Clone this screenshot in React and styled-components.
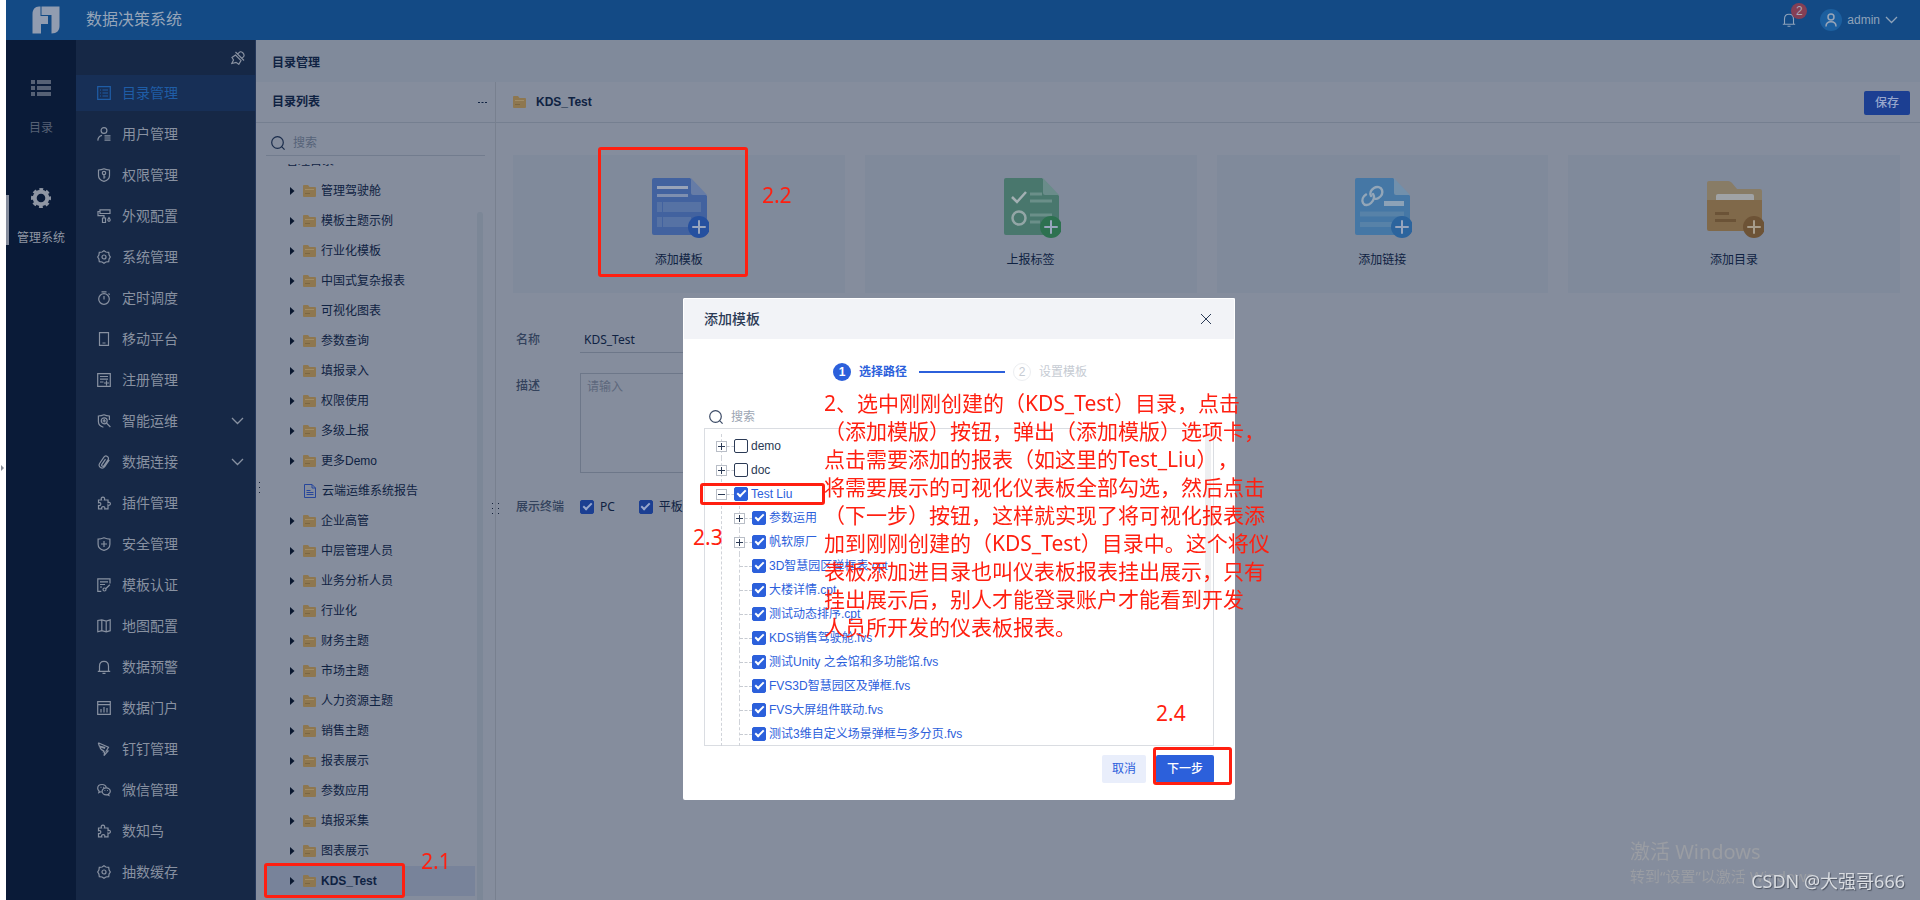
import React from "react";
import styled, { createGlobalStyle, css } from "styled-components";

const SANS = '"Liberation Sans", "Noto Sans CJK SC", sans-serif';
const HUMANIST = '"Noto Sans", "Noto Sans CJK SC", sans-serif';

const Global = createGlobalStyle`
  *, *::before, *::after { box-sizing: border-box; }
  html, body { margin: 0; height: 100%; overflow: hidden; }
  body { background: #fff; font-family: ${SANS}; font-size: 12px; line-height: 16px; color: #0f2242; }
  #root { height: 100%; }
  button, input, textarea { font: inherit; color: inherit; }
  button { padding: 0; border: 0; background: none; cursor: pointer; }
  ul { list-style: none; margin: 0; padding: 0; }
  a { color: inherit; text-decoration: none; }
  svg { display: block; flex: none; }
  h1, h2 { margin: 0; font-size: inherit; }
`;

/* ---------- frame ---------- */
const Page = styled.div`
  display: flex;
  height: 100vh;
`;
const Gutter = styled.div`
  width: 6px;
  flex: none;
  padding-top: 464px;
  color: #8a8f98;
`;
const Shell = styled.div`
  flex: 1;
  min-width: 0;
  display: flex;
  flex-direction: column;
  background: #858d9d;
`;
const TopBar = styled.header`
  flex: none;
  height: 40px;
  display: flex;
  align-items: center;
  padding: 0 22px 0 26px;
  background: #134a85;
  color: #8fa3ba;
`;
const Brand = styled.h1`
  flex: 1;
  margin-left: 26px;
  font-size: 16px;
  line-height: 24px;
  font-weight: 400;
  color: #96a5b9;
`;
const BellButton = styled.button`
  position: relative;
  margin-right: 24px;
`;
const Badge = styled.span`
  position: absolute;
  left: 9px;
  top: -10px;
  width: 16px;
  height: 16px;
  border-radius: 8px;
  background: #843f55;
  color: #a9a9b8;
  text-align: center;
`;
const UserButton = styled.button`
  display: flex;
  align-items: center;
  gap: 5px;
`;
const Avatar = styled.span`
  display: grid;
  place-items: center;
  width: 22px;
  height: 22px;
  border-radius: 11px;
  background: #1c5f9f;
`;
const Body = styled.div`
  flex: 1;
  min-height: 0;
  display: flex;
`;

/* ---------- rail ---------- */
const Rail = styled.nav`
  width: 70px;
  flex: none;
  background: #0a1b38;
`;
const RailItem = styled.a`
  position: relative;
  display: flex;
  flex-direction: column;
  align-items: center;
  gap: 22px;
  height: 110px;
  padding-top: 38px;
  color: ${(p) => (p.$active ? "#8f96a3" : "#566175")};
  ${(p) =>
    p.$active &&
    css`
      &::before {
        content: "";
        position: absolute;
        left: 0;
        top: 45px;
        width: 3px;
        height: 50px;
        background: #858d9d;
      }
    `}
`;

/* ---------- side menu ---------- */
const Side = styled.nav`
  width: 180px;
  flex: none;
  background: #162846;
  border-right: 1px solid #24375a;
  color: #8891a1;
`;
const PinRow = styled.div`
  display: flex;
  justify-content: flex-end;
  align-items: center;
  height: 35px;
  padding-right: 10px;
`;
const MenuList = styled.ul`
  display: flex;
  flex-direction: column;
  gap: 5px;
`;
const MenuLink = styled.a`
  display: flex;
  align-items: center;
  gap: 11px;
  height: 36px;
  padding: 0 11px 0 21px;
  font-size: 14px;
  line-height: 20px;
  background: ${(p) => (p.$active ? "#172f56" : "transparent")};
  color: ${(p) => (p.$active ? "#1f5da6" : "inherit")};
`;
const Grow = styled.span`
  flex: 1;
`;

/* ---------- content ---------- */
const Content = styled.main`
  flex: 1;
  min-width: 0;
  display: flex;
  flex-direction: column;
`;
const PageTitle = styled.h2`
  flex: none;
  height: 42px;
  padding: 0 16px;
  line-height: 46px;
  font-weight: 700;
  background: #808a9b;
`;
const Columns = styled.div`
  flex: 1;
  min-height: 0;
  display: flex;
`;
const TreePanel = styled.section`
  position: relative;
  width: 240px;
  flex: none;
  display: flex;
  flex-direction: column;
  border-right: 1px solid #78808f;
`;
const PanelHead = styled.div`
  flex: none;
  display: flex;
  align-items: center;
  height: 41px;
  padding: 0 8px 0 16px;
  border-bottom: 1px solid #757f90;
  font-weight: 700;
`;
const SearchBox = styled.label`
  flex: none;
  display: flex;
  align-items: center;
  gap: 8px;
  color: ${(p) => (p.$light ? "#3c4b66" : "#1a2c4b")};
  ${(p) =>
    p.$light
      ? css`
          height: 22px;
          padding-left: 5px;
        `
      : css`
          height: 33px;
          margin: 0 10px;
          padding: 8px 0 0 5px;
          border-bottom: 1px solid #727c8e;
        `}
`;
const SearchInput = styled.input`
  flex: 1;
  min-width: 0;
  padding: 0;
  border: 0;
  outline: 0;
  background: none;
  &::placeholder { color: ${(p) => (p.$light ? "#9ca5b3" : "#566379")}; opacity: 1; }
`;
const TreeScroll = styled.div`
  flex: 1;
  min-height: 0;
  margin-top: 8px;
  overflow: hidden;
  display: flex;
  align-items: flex-start;
`;
const TreeRows = styled.ul`
  flex: 1;
  margin: -18px 2px 0 10px;
`;
const TreeRow = styled.li`
  position: relative;
  display: flex;
  align-items: center;
  height: 30px;
  padding-left: ${(p) => (p.$root ? 20 : 23)}px;
  background: ${(p) => (p.$selected ? "#78839a" : "transparent")};
  font-weight: ${(p) => (p.$selected ? 700 : 400)};
`;
const Toggle = styled.button`
  width: 14px;
  visibility: ${(p) => (p.$hidden ? "hidden" : "visible")};
`;
const TreeLink = styled.a`
  display: flex;
  align-items: center;
  gap: ${(p) => (p.$doc ? 6 : 5)}px;
  padding-left: ${(p) => (p.$doc ? 1 : 0)}px;
`;
const ScrollThumb = styled.div`
  flex: none;
  width: 6px;
  height: 100%;
  border-radius: 3px;
  background: ${(p) => (p.$light ? "#eeeff1" : "#7c8797")};
  margin: ${(p) => (p.$light ? "0" : "48px 12px 0 0")};
`;
const Grip = styled.span`
  position: absolute;
  left: ${(p) => p.$left}px;
  top: ${(p) => p.$top}px;
  color: #16233b;
`;

/* ---------- detail ---------- */
const Detail = styled.section`
  flex: 1;
  min-width: 0;
`;
const DetailHead = styled(PanelHead)`
  gap: 10px;
  padding: 0 10px 0 17px;
`;
const SaveButton = styled.button`
  width: 46px;
  height: 24px;
  margin-top: 1px;
  border-radius: 2px;
  background: #1c3f92;
  color: #98a7cc;
  font-weight: 500;
`;
const Cards = styled.div`
  display: grid;
  grid-template-columns: repeat(4, 1fr);
  gap: 20px;
  padding: 32px 20px 0 17px;
`;
const Card = styled.div`
  position: relative;
  height: 138px;
  background: #808a9b;
`;
const CardButton = styled.button`
  display: flex;
  flex-direction: column;
  align-items: center;
  justify-content: flex-start;
  gap: 11px;
  width: 100%;
  height: 100%;
  padding-top: 22px;
`;
const Form = styled.form`
  padding: 28px 20px;
  display: grid;
  grid-template-columns: 64px 300px;
`;
const FieldLabel = styled.label`
  padding-top: ${(p) => p.$pad}px;
  font-weight: 500;
  color: #33425c;
`;
const NameInput = styled.input`
  height: 32px;
  padding: 6px 4px 0;
  border: 0;
  border-bottom: 1px solid #6d7789;
  outline: 0;
  background: none;
  font-family: ${HUMANIST};
`;
const DescInput = styled.textarea`
  height: 100px;
  margin: 20px 0 26px;
  padding: 5px 6px;
  border: 1px solid #6d7789;
  outline: 0;
  resize: none;
  background: none;
  &::placeholder { color: #5d687c; opacity: 1; }
`;
const Terminals = styled.div`
  display: flex;
  gap: 24px;
`;
const CheckLabel = styled.label`
  display: flex;
  align-items: center;
  gap: ${(p) => p.$gap}px;
  font-family: ${(p) => (p.$humanist ? HUMANIST : SANS)};
  color: ${(p) => p.$color || "inherit"};
  white-space: nowrap;
`;
const Check = styled.input`
  appearance: none;
  flex: none;
  width: 14px;
  height: 14px;
  margin: 0;
  border: 1px solid #2b3a55;
  border-radius: 2px;
  display: grid;
  place-items: center;
  &:checked {
    border-color: ${(p) => (p.$dim ? "#1c3f92" : "#2c60db")};
    background: ${(p) => (p.$dim ? "#1c3f92" : "#2c60db")};
  }
  &:checked::before {
    content: "";
    width: 9px;
    height: 5px;
    margin-bottom: 3px;
    border: solid ${(p) => (p.$dim ? "#98a7cc" : "#fff")};
    border-width: 0 0 2px 2px;
    rotate: -45deg;
  }
`;

/* ---------- dialog ---------- */
const Backdrop = styled.div`
  position: fixed;
  inset: 0;
  display: flex;
  justify-content: center;
  align-items: flex-start;
  padding: 298px 2px 0 0;
`;
const Dialog = styled.div`
  position: relative;
  width: 552px;
  border-radius: 2px;
  background: #fff;
  color: #2b3a55;
`;
const DialogHead = styled.div`
  display: flex;
  align-items: center;
  justify-content: space-between;
  height: 41px;
  padding: 0 23px 0 20px;
  background: #f2f3f7;
  border-radius: 2px 2px 0 0;
  border: 1px solid #fff;
  border-bottom: 0;
  font-size: 14px;
  font-weight: 500;
`;
const DialogBody = styled.div`
  padding: 22px 21px 17px;
`;
const Steps = styled.ol`
  display: flex;
  align-items: center;
  justify-content: center;
  gap: 8px;
  height: 22px;
  margin: 0 0 23px;
  padding: 0 0 0 2px;
  list-style: none;
`;
const Step = styled.li`
  display: flex;
  align-items: center;
  gap: 8px;
  color: ${(p) => (p.$on ? "#2c60db" : "#c6cbd3")};
  font-weight: ${(p) => (p.$on ? 700 : 400)};
`;
const StepDot = styled.span`
  width: 18px;
  height: 18px;
  border-radius: 9px;
  line-height: ${(p) => (p.$on ? 18 : 16)}px;
  text-align: center;
  background: ${(p) => (p.$on ? "#2c60db" : "#fff")};
  color: ${(p) => (p.$on ? "#fff" : "#c6cbd3")};
  border: ${(p) => (p.$on ? "0" : "1px solid #eceef1")};
`;
const StepLine = styled.li`
  width: 86px;
  height: 2px;
  margin: 0 0 0 4px;
  background: #2c60db;
`;
const FileBox = styled.div`
  display: flex;
  isolation: isolate;
  height: 318px;
  border: 1px solid #dadde2;
`;
const FileTree = styled.ul`
  flex: 1;
  padding: 5px 0 0 11px;
`;
const Branch = styled.ul`
  margin-left: 5px;
  padding-left: 12px;
  border-left: 1px dashed #d0d3d9;
`;
const FileRow = styled.li`
  position: relative;
  display: flex;
  align-items: center;
  height: 24px;
  ${(p) =>
    p.$line &&
    css`
      &::after {
        content: "";
        position: absolute;
        z-index: -1;
        left: 5px;
        top: 0;
        height: 24px;
        border-left: 1px dashed #d0d3d9;
      }
    `}
`;
const Expander = styled.button`
  width: 11px;
  height: 11px;
  background: #fff;
  border: 1px solid #b9bec7;
  color: #2b3a55;
`;
const Lead = styled.span`
  width: ${(p) => (p.$long ? 12 : 7)}px;
  margin-left: ${(p) => (p.$long ? 6 : 0)}px;
  border-top: 1px dashed #c6cad1;
`;
const ListThumb = styled(ScrollThumb)`
  height: 170px;
  margin: 5px 2px 0 0;
`;
const DialogActions = styled.div`
  display: flex;
  justify-content: flex-end;
  gap: 10px;
  margin-top: 9px;
`;
const ActionButton = styled.button`
  width: ${(p) => (p.$primary ? 58 : 44)}px;
  height: 28px;
  border-radius: 2px;
  background: ${(p) => (p.$primary ? "#2c60db" : "#e9eefb")};
  color: ${(p) => (p.$primary ? "#fff" : "#2c60db")};
  font-weight: ${(p) => (p.$primary ? 500 : 400)};
`;

/* ---------- annotations ---------- */
const Mark = styled.div`
  position: absolute;
  z-index: 2;
  left: ${(p) => p.$x}px;
  top: ${(p) => p.$y}px;
  width: ${(p) => p.$w}px;
  height: ${(p) => p.$h}px;
  border: 3px solid #ff1f10;
  border-radius: 3px;
  pointer-events: none;
`;
const CardMark = styled(Mark)`
  left: calc(50% - 81px);
`;
const MarkText = styled.div`
  position: absolute;
  z-index: 2;
  left: ${(p) => p.$x}px;
  top: ${(p) => p.$y}px;
  font: 400 21px/28px ${HUMANIST};
  text-spacing-trim: space-all;
  color: #ff1f10;
  white-space: nowrap;
  pointer-events: none;
`;
const CardMarkText = styled(MarkText)`
  left: calc(50% + 83px);
`;
const Activation = styled.div`
  position: fixed;
  right: 115px;
  bottom: 14px;
  width: 175px;
  white-space: nowrap;
  font: 400 15px/20px ${HUMANIST};
  color: #9a9da3;
`;
const ActivationTitle = styled.div`
  font-size: 20px;
  line-height: 28px;
`;
const Credit = styled.div`
  position: fixed;
  right: 15px;
  bottom: 7px;
  font: 400 18px/24px ${HUMANIST};
  color: #d9dce1;
  text-shadow: 1px 1px 1px #4c5361;
  white-space: nowrap;
`;

/* ---------- icons ---------- */
const Icon = ({ children, size = 14, w = 1.2, ...rest }) => (
  <svg width={size} height={size} viewBox="0 0 14 14" fill="none" stroke="currentColor" strokeWidth={w} aria-hidden="true" {...rest}>
    {children}
  </svg>
);
const hex = <path d="M7 .7 8.900 2 11.700 2.300 12.100 5 13.300 7 12.100 9 11.700 11.700 8.900 12 7 13.300 5.100 12 2.300 11.700 1.900 9 .7 7 1.900 5 2.300 2.300 5.100 2z" />;
const puzzle = <path d="M1.500 4h3c-.9-1.900.2-2.900 1.400-2.900S8.200 2.100 7.400 4H11v2.600c1.400-.7 2.400.1 2.400 1.200S12.400 9.700 11 9v3.900H7.700c.6-1.600-.4-2.300-1.500-2.300s-2 .7-1.400 2.300H1.500V9.500c1.600.5 2.300-.5 2.300-1.500S3.100 6.200 1.500 6.800z" />;
const bell = <path d="M2.500 11V6.200C2.500 3.200 4.300 1.300 7 1.300s4.500 1.900 4.500 4.900V11M.8 11.300h12.400M5.500 13.300h3" />;
const glyphs = {
  list: <path d="M.7.7h12.600v12.600H.7zM3 4h1M5.500 4H11M3 7h1M5.500 7H11M3 10h1M5.500 10H11" />,
  user: <><circle cx="7" cy="3.500" r="2.900" /><path d="M.8 13.600c.2-3 1.600-4.800 4.200-5.300M7.500 8.800h6M7.500 11h6M7.500 13.200h6" /></>,
  shieldKey: <><path d="M7 .8c2 .9 3.700 1.200 5.500 1.200v5.500c0 3-2 5-5.500 5.800-3.500-.8-5.500-2.800-5.500-5.800V2C3.300 2 5 1.700 7 .8z" /><circle cx="7" cy="5" r="1.700" /><path d="M7 6.700v4M7 9h1.500" /></>,
  roller: <path d="M3 .9h10v3.600H3zM3 2.500H1v4.200h6v2M5.500 9h3v4.500h-3zM12 8.500c-1 1.500-1.200 2-1.200 2.600a1.100 1.100 0 0 0 2.400 0c0-.6-.2-1.100-1.200-2.600z" />,
  gear: <>{hex}<circle cx="7" cy="7" r="2" /></>,
  timer: <><circle cx="7" cy="8" r="5.300" /><path d="M7 5v3.500M4.500.8h5M11.500 2.500l1.200 1.200" /></>,
  phone: <path d="M2.500.7h9v12.600h-9zM5.500 11h3" />,
  register: <path d="M.7.7h12.600v12.600H.7zM3 3.500h8M3 6.200h8M3 9h3.500M9.500 7.500v5M7 10h5" />,
  smart: <><path d="M12.400 6V2C10 2 8.500 1.600 7 .8 5 1.700 3.500 2 1.400 2v5.500c0 3 2 4.800 5 5.700" /><circle cx="7.200" cy="6.800" r="3" /><path d="M9.400 9l4 4M7.200 5v3.600M5.600 6.800h3.200" /></>,
  clip: <path d="M12.300 4.800 7.700 11.600c-1 1.400-2.700 1.900-4.200 1S1.700 9.900 2.600 8.500L6.900 2.200c.8-1.200 2.200-1.500 3.400-.8s1.500 2.200.7 3.400l-4 5.900c-.5.7-1.200.8-1.800.4s-.7-1.100-.3-1.700L8.500 4.200" />,
  puzzle,
  shieldPlus: <path d="M7 .8c2 .9 4 1.400 5.900 1.400v5C12.900 10.400 10.600 12.500 7 13.400 3.400 12.500 1.100 10.400 1.100 7.200v-5C3 2.200 5 1.700 7 .8zM7 4v6M4 7h6" />,
  certify: <path d="M13 5.500V.8H.8v12.500h3.500M3 3.800h8M3 6.500h5M3 9h2M12.800 6.800 8.500 11M6 11.500a1.500 1.500 0 1 0 3 0 1.500 1.500 0 0 0-3 0" />,
  map: <path d="M.8 1.500v11.300l4-1.100 4.400 1.100 4-1.100V.9l-4 1.200L4.800.9zM4.800.9v10.800M9.200 2.100v10.700" />,
  bell,
  portal: <path d="M.7.7h12.600v12.600H.7zM.7 3.700h12.600M4 11.500V8M7 11.500V6M10 11.500V7" />,
  ding: <path d="M1.300.8 11.500 5.200 9.300 9H11l-4 4.600.8-3.600H6.300l.4-1.300C4.500 8 3.200 6.500 2.900 4.800L8 6.500M1.300.8l1 3.200 6 1.600" />,
  wechat: <><path d="M9.300 4.700C8.900 2.700 7.200 1.500 5.100 1.500 2.600 1.500.7 3.100.7 5.300c0 1.200.6 2.200 1.500 2.900l-.4 1.500 1.800-.9 1.200.2" /><path d="M9.200 4.900c-2.300 0-4.100 1.500-4.100 3.400s1.800 3.500 4.100 3.500l1.200-.2 1.500.8-.3-1.400c1-.6 1.700-1.600 1.700-2.700 0-1.900-1.800-3.400-4.100-3.400zM3.600 4.300h.8M6.200 4.300H7M7.500 7.500h.8M10.200 7.500h.8" /></>,
};

const Chevron = () => (
  <svg width="13" height="8" viewBox="0 0 13 8" fill="none" stroke="currentColor" strokeWidth="1.300" aria-hidden="true">
    <path d="M1 1l5.500 5.500L12 1" />
  </svg>
);
const Search = () => (
  <svg width="14" height="14" viewBox="0 0 14 14" fill="none" stroke="currentColor" strokeWidth="1.200" aria-hidden="true">
    <circle cx="6.500" cy="6.500" r="5.800" />
    <path d="M10.600 10.600 13.600 13.600" />
  </svg>
);
const Folder = () => (
  <svg width="13" height="12" viewBox="0 0 13 12" aria-hidden="true">
    <path d="M0 1a1 1 0 0 1 1-1h4l1.500 2H12a1 1 0 0 1 1 1v8a1 1 0 0 1-1 1H1a1 1 0 0 1-1-1z" fill="#8e774f" />
    <path d="M2 4.500h9" stroke="#a08c66" />
    <path d="M2 8.500h5" stroke="#7b6642" />
  </svg>
);
const Doc = () => (
  <svg width="12" height="14" viewBox="0 0 12 14" fill="none" stroke="#27469a" aria-hidden="true">
    <path d="M.5.500h7.500l3.500 3.500v9.500H.5zM8 .5V4h3.500M2.500 6.500h4M2.500 8.500h7M2.500 10.500h7" />
  </svg>
);
const Dots = ({ cols = 2 }) => (
  <svg width="10" height="14" viewBox="0 0 10 14" fill="currentColor" aria-hidden="true">
    {[1, 6, 11].map((y) => (
      <React.Fragment key={y}>
        <rect x="1" y={y} width="1" height="1" opacity={cols === 2 ? 1 : 0.35} />
        <rect x="7" y={y} width="1" height="1" />
      </React.Fragment>
    ))}
  </svg>
);
const PageShape = ({ body, fold }) => (
  <>
    <path d="M5 1h36l17 18v37a2 2 0 0 1-2 2H5a2 2 0 0 1-2-2V3a2 2 0 0 1 2-2z" fill={body} />
    <path d="M42 1v15a2 2 0 0 0 2 2h14z" fill={fold} />
  </>
);
const Plus = ({ fill, line = "#98a5bd" }) => (
  <>
    <circle cx="50" cy="50" r="11" fill={fill} />
    <path d="M50 44v12M44 50h12" stroke={line} strokeWidth="2" strokeLinecap="round" />
  </>
);
const art = {
  template: (
    <>
      <PageShape body="#42629f" fold="#667ca6" />
      <path d="M8 10.500h31" stroke="#98a3b8" strokeWidth="3" />
      <path d="M8 18.500h31" stroke="#7e8fb0" strokeWidth="3" />
      <path d="M8 25h5v10H8zM14 25h38v10H14zM8 40h5v10H8zM14 40h28v10H14z" fill="#5672a4" />
      <Plus fill="#25509f" />
    </>
  ),
  report: (
    <>
      <PageShape body="#49776d" fold="#6a8c8a" />
      <path d="M11 20l5 5 9-10" stroke="#a3b0b3" strokeWidth="2.500" fill="none" />
      <circle cx="18" cy="41" r="6.500" stroke="#93a6a6" strokeWidth="2.500" fill="none" />
      <path d="M29 17h12M29 24h22M29 38h22M29 45h10" stroke="#6b8f89" strokeWidth="3" />
      <Plus fill="#2d7150" />
    </>
  ),
  link: (
    <>
      <PageShape body="#4577a5" fold="#7190ac" />
      <g fill="none" stroke="#93a6b8" strokeWidth="2.400" strokeLinecap="round">
        <path d="M19 19c-1.500-3 0-6 3-8s7-1 8 2-.5 6-3.500 8c-1.500 1-3 1-4 .5" />
        <path d="M21 17c2 3 .5 6.500-2 9s-6.500 3-8 0 0-6.500 3-8.500" />
      </g>
      <path d="M32 26.500h20" stroke="#8ca2b7" strokeWidth="5" />
      <path d="M8 37h44M8 47.500h32" stroke="#5782a8" strokeWidth="5" />
      <Plus fill="#2c649d" />
    </>
  ),
  folder: (
    <>
      <path d="M5 4h19c2 0 3 1 4 2l5 6h23a2 2 0 0 1 2 2v38H3V6a2 2 0 0 1 2-2z" fill="#887c66" />
      <path d="M12 24v-5a2 2 0 0 1 2-2h34a2 2 0 0 1 2 2v5z" fill="#a0a3a6" />
      <path d="M3 23h55v29a2 2 0 0 1-2 2H5a2 2 0 0 1-2-2z" fill="#80694a" />
      <path d="M11 36.500h14M11 43.500h21" stroke="#6b5337" strokeWidth="3" />
      <Plus fill="#6d5336" line="#a79d8c" />
    </>
  ),
};

/* ---------- data ---------- */
const menu = [
  ["目录管理", "list"], ["用户管理", "user"], ["权限管理", "shieldKey"], ["外观配置", "roller"],
  ["系统管理", "gear"], ["定时调度", "timer"], ["移动平台", "phone"], ["注册管理", "register"],
  ["智能运维", "smart", true], ["数据连接", "clip", true], ["插件管理", "puzzle"], ["安全管理", "shieldPlus"],
  ["模板认证", "certify"], ["地图配置", "map"], ["数据预警", "bell"], ["数据门户", "portal"],
  ["钉钉管理", "ding"], ["微信管理", "wechat"], ["数知鸟", "puzzle"], ["抽数缓存", "gear"],
];
const folders = [
  "管理驾驶舱", "模板主题示例", "行业化模板", "中国式复杂报表", "可视化图表", "参数查询", "填报录入", "权限使用",
  "多级上报", "更多Demo", "云端运维系统报告", "企业高管", "中层管理人员", "业务分析人员", "行业化", "财务主题",
  "市场主题", "人力资源主题", "销售主题", "报表展示", "参数应用", "填报采集", "图表展示", "KDS_Test",
];
const cards = [["添加模板", "template"], ["上报标签", "report"], ["添加链接", "link"], ["添加目录", "folder"]];
const files = [
  ["参数运用", true], ["帆软原厂", true], ["3D智慧园区弹框表.cpt"], ["大楼详情.cpt"], ["测试动态排序.cpt"],
  ["KDS销售驾驶舱.fvs"], ["测试Unity 之会馆和多功能馆.fvs"], ["FVS3D智慧园区及弹框.fvs"],
  ["FVS大屏组件联动.fvs"], ["测试3维自定义场景弹框与多分页.fvs"],
];
const note = [
  "2、选中刚刚创建的（KDS_Test）目录，点击",
  "（添加模版）按钮，弹出（添加模版）选项卡，",
  "点击需要添加的报表（如这里的Test_Liu），",
  "将需要展示的可视化仪表板全部勾选，然后点击",
  "（下一步）按钮，这样就实现了将可视化报表添",
  "加到刚刚创建的（KDS_Test）目录中。这个将仪",
  "表板添加进目录也叫仪表板报表挂出展示，只有",
  "挂出展示后，别人才能登录账户才能看到开发",
  "人员所开发的仪表板报表。",
];

const ExpandButton = ({ open = false, label }) => (
  <Expander type="button" aria-label={label} aria-expanded={open}>
    <svg width="9" height="9" viewBox="0 0 9 9" stroke="currentColor" aria-hidden="true">
      <path d={open ? "M1 4.500h7" : "M1 4.500h7M4.500 1v7"} />
    </svg>
  </Expander>
);
const CheckItem = ({ name, checked }) => (
  <CheckLabel $gap={3} $color={checked ? "#2c60db" : "#2b3a55"}>
    <Check type="checkbox" defaultChecked={checked} />
    {name}
  </CheckLabel>
);

function Header() {
  return (
    <TopBar>
      <svg width="28" height="28" viewBox="0 0 28 28" fill="#919cb0" aria-hidden="true">
        <path d="M7 .5h1.500V10H16v8H9v9.500H.5V8C.5 3.500 3 .5 7 .5z" />
        <path d="M9.500.5h18V20c0 4.500-2.500 7.500-8 7.500V9h-10z" />
      </svg>
      <Brand>数据决策系统</Brand>
      <BellButton type="button" aria-label="消息">
        <Icon w={1.1}>{bell}</Icon>
        <Badge>2</Badge>
      </BellButton>
      <UserButton type="button">
        <Avatar>
          <svg width="14" height="14" viewBox="0 0 14 14" fill="none" stroke="#98a5b8" strokeWidth="1.500" aria-hidden="true">
            <circle cx="7" cy="4" r="3" />
            <path d="M2 13.500c0-3 2-4.800 5-4.800s5 1.800 5 4.800" />
          </svg>
        </Avatar>
        admin
        <Chevron />
      </UserButton>
    </TopBar>
  );
}

function DirectoryTree() {
  return (
    <TreePanel>
      <PanelHead>
        <Grow>目录列表</Grow>
        <button type="button" aria-label="更多">
          <svg width="9" height="3" viewBox="0 0 9 3" fill="currentColor" aria-hidden="true">
            <path d="M0 1h2v1H0zM3.500 1h2v1h-2zM7 1h2v1H7z" />
          </svg>
        </button>
      </PanelHead>
      <SearchBox>
        <Search />
        <SearchInput placeholder="搜索" aria-label="搜索目录" />
      </SearchBox>
      <TreeScroll>
        <TreeRows>
          <TreeRow $root>管理目录</TreeRow>
          {folders.map((name) => {
            const doc = name === "云端运维系统报告";
            return (
              <TreeRow key={name} $selected={name === "KDS_Test"}>
                <Toggle type="button" $hidden={doc} aria-label={`展开${name}`}>
                  <svg width="6" height="8" viewBox="0 0 6 8" fill="#0a1830" aria-hidden="true"><path d="M1 0l4.500 4L1 8z" /></svg>
                </Toggle>
                <TreeLink href="#" $doc={doc}>{doc ? <Doc /> : <Folder />}{name}</TreeLink>
              </TreeRow>
            );
          })}
        </TreeRows>
        <ScrollThumb />
      </TreeScroll>
      <Grip $left={-4} $top={399}><Dots cols={1} /></Grip>
      <Grip $left={235} $top={420}><Dots /></Grip>
      <Mark $x={8} $y={781} $w={141} $h={35} />
      <MarkText $x={165} $y={765}>2.1</MarkText>
    </TreePanel>
  );
}

function DetailPanel() {
  return (
    <Detail>
      <DetailHead>
        <Folder />
        <Grow>KDS_Test</Grow>
        <SaveButton type="button">保存</SaveButton>
      </DetailHead>
      <Cards>
        {cards.map(([name, key], i) => (
          <Card key={key}>
            <CardButton type="button">
              <svg width="60" height="64" viewBox="0 0 60 64" aria-hidden="true">{art[key]}</svg>
              {name}
            </CardButton>
            {i === 0 && (
              <>
                <CardMark $y={-8} $w={150} $h={130} />
                <CardMarkText $y={26}>2.2</CardMarkText>
              </>
            )}
          </Card>
        ))}
      </Cards>
      <Form>
        <FieldLabel htmlFor="name" $pad={11}>名称</FieldLabel>
        <NameInput id="name" defaultValue="KDS_Test" />
        <FieldLabel htmlFor="desc" $pad={25}>描述</FieldLabel>
        <DescInput id="desc" placeholder="请输入" />
        <FieldLabel as="span" $pad={0}>展示终端</FieldLabel>
        <Terminals>
          {["PC", "平板"].map((t) => (
            <CheckLabel key={t} $gap={6} $humanist>
              <Check type="checkbox" $dim defaultChecked />
              {t}
            </CheckLabel>
          ))}
        </Terminals>
      </Form>
    </Detail>
  );
}

function TemplateDialog() {
  return (
    <Backdrop>
      <Dialog role="dialog" aria-label="添加模板">
        <DialogHead>
          添加模板
          <button type="button" aria-label="关闭">
            <svg width="10" height="10" viewBox="0 0 10 10" stroke="#2b3a55" aria-hidden="true"><path d="M0 0l10 10M10 0L0 10" /></svg>
          </button>
        </DialogHead>
        <DialogBody>
          <Steps>
            <Step $on><StepDot $on>1</StepDot>选择路径</Step>
            <StepLine aria-hidden="true" />
            <Step><StepDot>2</StepDot>设置模板</Step>
          </Steps>
          <SearchBox $light>
            <Search />
            <SearchInput $light placeholder="搜索" aria-label="搜索模板" />
          </SearchBox>
          <FileBox>
            <FileTree>
              {["demo", "doc"].map((n) => (
                <FileRow key={n} $line>
                  <ExpandButton label={n} />
                  <Lead />
                  <CheckItem name={n} checked={false} />
                </FileRow>
              ))}
              <FileRow>
                <ExpandButton open label="Test Liu" />
                <Lead />
                <CheckItem name="Test Liu" checked />
              </FileRow>
              <Branch>
                {files.map(([n, dir]) => (
                  <FileRow key={n} $line>
                    {dir && <ExpandButton label={n} />}
                    <Lead $long={!dir} />
                    <CheckItem name={n} checked />
                  </FileRow>
                ))}
              </Branch>
            </FileTree>
            <ListThumb $light />
          </FileBox>
          <DialogActions>
            <ActionButton type="button">取消</ActionButton>
            <ActionButton type="button" $primary>下一步</ActionButton>
          </DialogActions>
        </DialogBody>
        <Mark $x={17} $y={185} $w={125} $h={22} />
        <MarkText $x={10} $y={225}>2.3</MarkText>
        <Mark $x={470} $y={449} $w={79} $h={38} />
        <MarkText $x={473} $y={401}>2.4</MarkText>
        <MarkText $x={141} $y={91}>
          {note.map((line) => <div key={line}>{line}</div>)}
        </MarkText>
      </Dialog>
    </Backdrop>
  );
}

export default function App() {
  return (
    <>
      <Global />
      <Page>
        <Gutter>
          <svg width="4" height="8" viewBox="0 0 4 8" fill="currentColor" aria-hidden="true"><path d="M1 1l3 3-3 3z" /></svg>
        </Gutter>
        <Shell>
          <Header />
          <Body>
            <Rail>
              <RailItem href="#">
                <svg width="20" height="20" viewBox="0 0 20 20" fill="currentColor" aria-hidden="true">
                  <path d="M0 2h4v4H0zM6 2h14v4H6zM0 8h4v4H0zM6 8h14v4H6zM0 14h4v4H0zM6 14h14v4H6z" />
                </svg>
                目录
              </RailItem>
              <RailItem href="#" $active>
                <svg width="20" height="20" viewBox="0 0 20 20" aria-hidden="true">
                  <g fill="none" stroke="currentColor">
                    <circle cx="10" cy="10" r="6.300" strokeWidth="4" />
                    <circle cx="10" cy="10" r="8.700" strokeWidth="2.600" strokeDasharray="3.800 3.033" strokeDashoffset="1.900" />
                  </g>
                </svg>
                管理系统
              </RailItem>
            </Rail>
            <Side>
              <PinRow>
                <button type="button" aria-label="取消固定">
                  <Icon>
                    <path d="M4.500 1 13 9.500M6.500 3 9 .9c1.500-.7 4.500 1.600 4 4.100l-2 2.500M4.500 4 1 6.500 2.500 9 .8 12.500l4.200-1.200 2.800 2L10 9.500z" />
                  </Icon>
                </button>
              </PinRow>
              <MenuList>
                {menu.map(([name, icon, sub], i) => (
                  <li key={name}>
                    <MenuLink href="#" $active={i === 0}>
                      <Icon>{glyphs[icon]}</Icon>
                      <Grow>{name}</Grow>
                      {sub && <Chevron />}
                    </MenuLink>
                  </li>
                ))}
              </MenuList>
            </Side>
            <Content>
              <PageTitle>目录管理</PageTitle>
              <Columns>
                <DirectoryTree />
                <DetailPanel />
              </Columns>
            </Content>
          </Body>
        </Shell>
      </Page>
      <TemplateDialog />
      <Activation>
        <ActivationTitle>激活 Windows</ActivationTitle>
        转到“设置”以激活 Windows。
      </Activation>
      <Credit>CSDN @大强哥666</Credit>
    </>
  );
}
